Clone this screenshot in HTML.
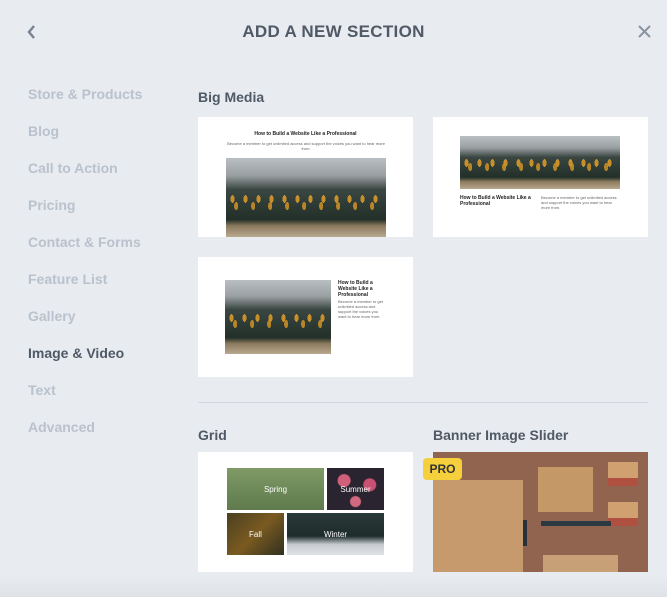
<!DOCTYPE html>
<html><head><meta charset="utf-8"><style>
*{margin:0;padding:0;box-sizing:border-box}
body{width:667px;height:597px;background:#e8ebf0;font-family:"Liberation Sans",sans-serif;position:relative;overflow:hidden}
.a{position:absolute}
.nav{left:28px;font-size:14px;font-weight:bold;color:#b9c2cd}
.h{font-size:14px;font-weight:bold;color:#4f5a66}
.card{background:#fff}
.forest{background:
radial-gradient(ellipse 2px 4px at 50% 50%,#c8902a 0 100%,transparent 100%) 0 52%/13px 14px repeat-x,
radial-gradient(ellipse 2px 4px at 30% 50%,#b88428 0 100%,transparent 100%) 5px 62%/17px 12px repeat-x,
linear-gradient(#b9bec2 0%,#9aa0a2 22%,#3a4642 40%,#233029 78%,#8c7a5e 86%,#b8a88e 100%)}
.t{font-size:5px;font-weight:bold;color:#222}
.p{font-size:4px;color:#666;line-height:5px}
.g{color:#fff;font-size:8px;display:flex;align-items:center;justify-content:center}
</style></head><body>
<svg class="a" style="left:26px;top:24px" width="10" height="16" viewBox="0 0 10 16"><path d="M8 2 L3 8 L8 14" stroke="#7a8592" stroke-width="2.5" fill="none"/></svg>
<div class="a" style="left:0;width:667px;top:22px;text-align:center;font-size:17px;font-weight:bold;color:#4f5a66;letter-spacing:.3px">ADD A NEW SECTION</div>
<svg class="a" style="left:638px;top:25px" width="13" height="13" viewBox="0 0 13 13"><path d="M1 1 L12 12 M12 1 L1 12" stroke="#8a94a0" stroke-width="2" fill="none"/></svg>
<div class="a nav" style="top:86px">Store &amp; Products</div>
<div class="a nav" style="top:123px">Blog</div>
<div class="a nav" style="top:160px">Call to Action</div>
<div class="a nav" style="top:197px">Pricing</div>
<div class="a nav" style="top:234px">Contact &amp; Forms</div>
<div class="a nav" style="top:271px">Feature List</div>
<div class="a nav" style="top:308px">Gallery</div>
<div class="a nav" style="top:345px;color:#4f5a66">Image &amp; Video</div>
<div class="a nav" style="top:382px">Text</div>
<div class="a nav" style="top:419px">Advanced</div>

<div class="a h" style="left:198px;top:89px">Big Media</div>
<div class="a card" style="left:198px;top:117px;width:215px;height:120px">
 <div class="a t" style="left:0;width:215px;top:14px;text-align:center">How to Build a Website Like a Professional</div>
 <div class="a p" style="left:28px;width:160px;top:24px;text-align:center">Become a member to get unlimited access and support the voices you want to hear more from.</div>
 <div class="a forest" style="left:28px;top:41px;width:160px;height:79px"></div>
</div>
<div class="a card" style="left:433px;top:117px;width:215px;height:120px">
 <div class="a forest" style="left:27px;top:19px;width:160px;height:53px"></div>
 <div class="a t" style="left:27px;top:78px;width:75px">How to Build a Website Like a Professional</div>
 <div class="a p" style="left:108px;top:78px;width:80px">Become a member to get unlimited access and support the voices you want to hear more from.</div>
</div>
<div class="a card" style="left:198px;top:257px;width:215px;height:120px">
 <div class="a forest" style="left:27px;top:23px;width:106px;height:74px"></div>
 <div class="a t" style="left:140px;top:23px;width:48px">How to Build a Website Like a Professional</div>
 <div class="a p" style="left:140px;top:42px;width:48px">Become a member to get unlimited access and support the voices you want to hear more from.</div>
</div>
<div class="a" style="left:198px;top:402px;width:450px;height:1px;background:#d3d8df"></div>
<div class="a h" style="left:198px;top:427px">Grid</div>
<div class="a h" style="left:433px;top:427px">Banner Image Slider</div>
<div class="a card" style="left:198px;top:452px;width:215px;height:120px">
 <div class="a g" style="left:29px;top:16px;width:97px;height:42px;background:linear-gradient(#7f9a66,#5f7a4c)">Spring</div>
 <div class="a g" style="left:129px;top:16px;width:57px;height:42px;background:radial-gradient(circle at 30% 30%,#d0607a 0 6px,transparent 7px),radial-gradient(circle at 75% 40%,#c85070 0 6px,transparent 7px),radial-gradient(circle at 50% 80%,#d06880 0 5px,transparent 6px),#2a2430">Summer</div>
 <div class="a g" style="left:29px;top:61px;width:57px;height:42px;background:linear-gradient(135deg,#4a4020,#7a5a20 50%,#303020)">Fall</div>
 <div class="a g" style="left:89px;top:61px;width:97px;height:42px;background:linear-gradient(#2a3a38 0%,#1e2c2c 55%,#c8ccd0 75%,#e0e2e4)">Winter</div>
</div>
<div class="a" style="left:433px;top:452px;width:215px;height:120px;background:#916450">
 <div class="a" style="left:0;top:28px;width:90px;height:92px;background:#c79a6e"></div>
 <div class="a" style="left:105px;top:15px;width:55px;height:45px;background:#c59868"></div>
 <div class="a" style="left:175px;top:10px;width:30px;height:80px;background:linear-gradient(#d0a070 0 20%,#b05040 20% 30%,transparent 30% 50%,#d0a070 50% 70%,#b05040 70% 80%,transparent 80%)"></div>
 <div class="a" style="left:108px;top:69px;width:70px;height:5px;background:#2a3a40"></div>
 <div class="a" style="left:110px;top:103px;width:75px;height:17px;background:#c8a078"></div>
 <div class="a" style="left:90px;top:68px;width:4px;height:26px;background:#28303a"></div>
</div>
<div class="a" style="left:423px;top:458px;width:39px;height:22px;background:#f5cf3c;border-radius:4px;font-size:12px;font-weight:bold;color:#333;text-align:center;line-height:22px">PRO</div>
<div class="a" style="left:0;top:575px;width:667px;height:22px;background:linear-gradient(#e8ebf0,#dfe2e7)"></div>
</body></html>
